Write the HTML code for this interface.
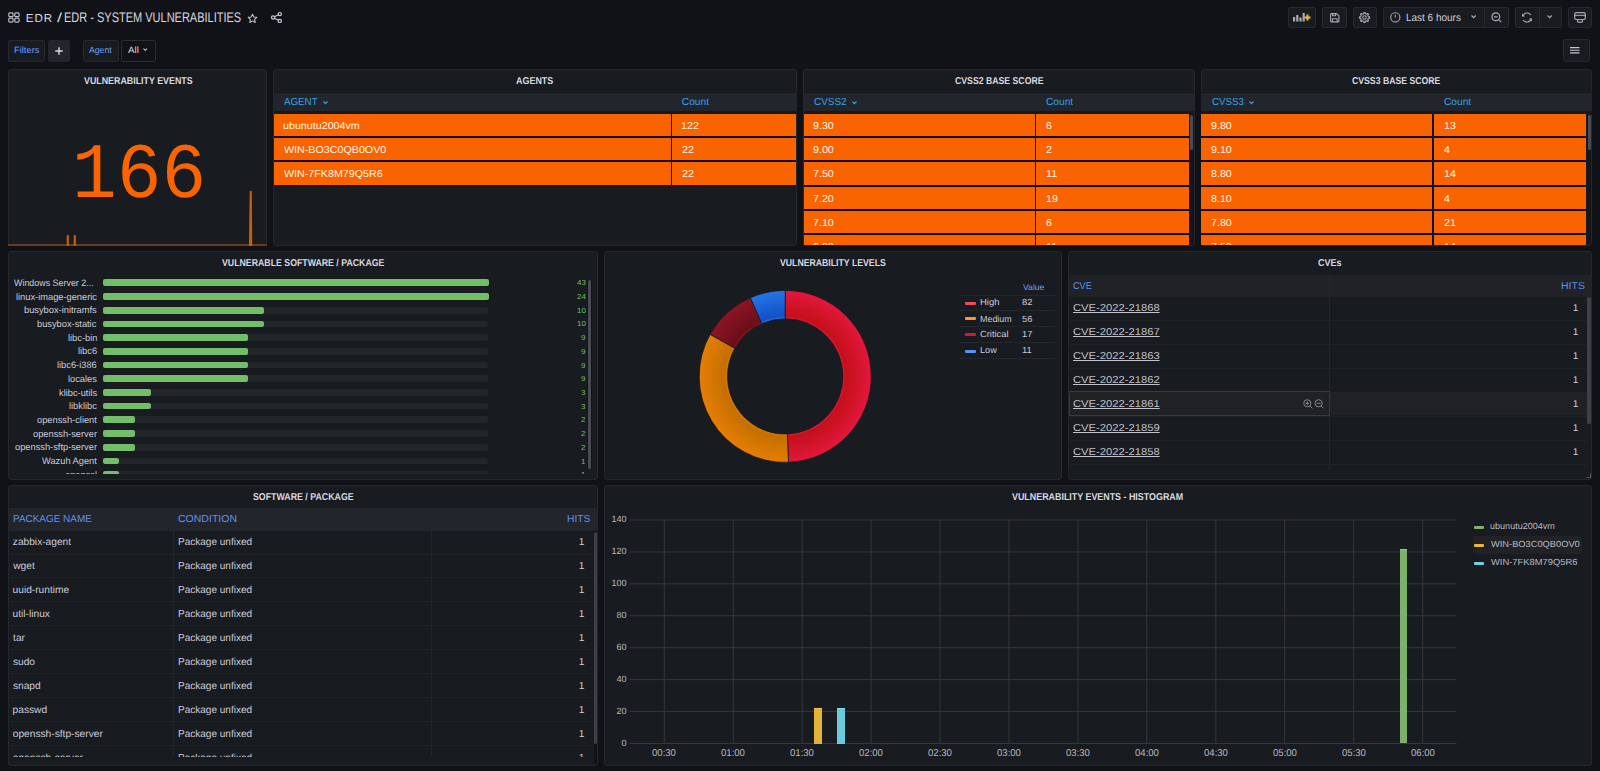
<!DOCTYPE html><html><head><meta charset="utf-8"><style>
*{margin:0;padding:0;box-sizing:border-box}
html,body{width:1600px;height:771px;overflow:hidden;background:#111217;font-family:"Liberation Sans",sans-serif;color:#ccccdc;text-rendering:geometricPrecision}
.a{position:absolute}
.p{position:absolute;background:#181b1f;border:1px solid #24272c;border-radius:3px}
.b{position:absolute;border:1px solid #25282d;border-radius:2px;background:#181b1f}
.t{position:absolute;white-space:nowrap}
svg{position:absolute;overflow:visible}
</style></head><body>
<svg style="left:8px;top:12px" width="12" height="11" viewBox="0 0 12 11"><g fill="none" stroke="#b9bac4" stroke-width="1.2"><rect x="0.8" y="0.8" width="4.3" height="3.9" rx="1"/><rect x="6.8" y="0.8" width="4.3" height="3.9" rx="1"/><rect x="0.8" y="6.2" width="4.3" height="3.9" rx="1"/><rect x="6.8" y="6.2" width="4.3" height="3.9" rx="1"/></g></svg>
<div class="t" style="left:25.75px;top:13.00px;font-size:11.6px;line-height:11.6px;font-weight:normal;color:#d8d9e0;letter-spacing:0.95px;">EDR</div>
<div class="t" style="left:57.00px;top:11.00px;font-size:13px;line-height:13px;font-weight:normal;color:#d8d9e0;transform:scaleX(1.3835);transform-origin:0 0;">/</div>
<div class="t" style="left:64.30px;top:10.00px;font-size:14px;line-height:14px;font-weight:normal;color:#d8d9e0;transform:scaleX(0.7854);transform-origin:0 0;">EDR - SYSTEM VULNERABILITIES</div>
<svg style="left:247px;top:12.5px" width="11" height="11" viewBox="0 0 24 24"><path d="M12 2.5l2.9 6.1 6.6.8-4.9 4.6 1.3 6.6L12 17.3l-5.9 3.3 1.3-6.6-4.9-4.6 6.6-.8z" fill="none" stroke="#c8c9d2" stroke-width="2.2" stroke-linejoin="round"/></svg>
<svg style="left:270.5px;top:12px" width="11" height="11" viewBox="0 0 11 11"><g fill="none" stroke="#c8c9d2" stroke-width="1.2"><circle cx="8.8" cy="2.1" r="1.6"/><circle cx="8.8" cy="8.9" r="1.6"/><circle cx="2.1" cy="5.5" r="1.6"/><path d="M3.5 4.7l3.9-2M3.5 6.3l3.9 2"/></g></svg>
<div class="b" style="left:1287.5px;top:7px;width:28.5px;height:21px;background:#181b1f;border-color:#25282d"></div>
<div class="b" style="left:1321.75px;top:7px;width:25.0px;height:21px;background:#181b1f;border-color:#25282d"></div>
<div class="b" style="left:1352.5px;top:7px;width:24.25px;height:21px;background:#181b1f;border-color:#25282d"></div>
<div class="b" style="left:1383.4px;top:7px;width:125.59999999999991px;height:21px;background:#181b1f;border-color:#25282d"></div>
<div class="a" style="left:1484px;top:8px;width:1px;height:19px;background:#25282d"></div>
<div class="b" style="left:1514.9px;top:7px;width:46.84999999999991px;height:21px;background:#181b1f;border-color:#25282d"></div>
<div class="a" style="left:1538.5px;top:8px;width:1.0px;height:19px;background:#25282d"></div>
<div class="b" style="left:1567.75px;top:7px;width:24.25px;height:21px;background:#181b1f;border-color:#25282d"></div>
<svg style="left:1293px;top:12px" width="18" height="10" viewBox="0 0 18 10"><g fill="#a8a9b3"><rect x="0" y="5" width="2.2" height="4.5"/><rect x="3.2" y="3" width="2.2" height="6.5"/><rect x="6.4" y="5.5" width="2.2" height="4"/><rect x="9.6" y="1" width="2.2" height="8.5"/></g><path d="M14.5 2.5v6M11.5 5.5h6" stroke="#f5b73b" stroke-width="2"/></svg>
<svg style="left:1330px;top:12.7px" width="9.5" height="9.5" viewBox="0 0 9.5 9.5"><path d="M0.6 1.4Q0.6 0.6 1.4 0.6H6.6L8.9 2.9V8.1Q8.9 8.9 8.1 8.9H1.4Q0.6 8.9 0.6 8.1Z" fill="none" stroke="#a8a9b3" stroke-width="1.1" stroke-linejoin="round"/><path d="M2.6 0.8V2.8H5.6V0.8M2.4 8.8V5.8H7.1V8.8" fill="none" stroke="#a8a9b3" stroke-width="1.1"/></svg>
<svg style="left:1359px;top:11.8px" width="11" height="11" viewBox="0 0 11 11"><path d="M4.73 1.68 L4.84 0.44 L6.16 0.44 L6.27 1.68 L7.65 2.25 L8.61 1.46 L9.54 2.39 L8.75 3.35 L9.32 4.73 L10.56 4.84 L10.56 6.16 L9.32 6.27 L8.75 7.65 L9.54 8.61 L8.61 9.54 L7.65 8.75 L6.27 9.32 L6.16 10.56 L4.84 10.56 L4.73 9.32 L3.35 8.75 L2.39 9.54 L1.46 8.61 L2.25 7.65 L1.68 6.27 L0.44 6.16 L0.44 4.84 L1.68 4.73 L2.25 3.35 L1.46 2.39 L2.39 1.46 L3.35 2.25Z" fill="none" stroke="#a8a9b3" stroke-width="1.1" stroke-linejoin="round"/><circle cx="5.5" cy="5.5" r="1.7" fill="none" stroke="#a8a9b3" stroke-width="1.1"/></svg>
<svg style="left:1389.7px;top:12px" width="11" height="11" viewBox="0 0 11 11"><circle cx="5.3" cy="5.4" r="4.6" fill="none" stroke="#a8a9b3" stroke-width="1.1"/><path d="M5.3 2.8v2.6" stroke="#a8a9b3" stroke-width="1.1"/></svg>
<div class="t" style="left:1406.08px;top:13.00px;font-size:10.5px;line-height:10.5px;font-weight:normal;color:#d0d1db;transform:scaleX(0.9497);transform-origin:0 0;">Last 6 hours</div>
<svg style="left:1470.75px;top:15.1px" width="5.3" height="3.2" viewBox="0 0 5.3 3.2"><path d="M0.5 0.5L2.65 2.7L4.8 0.5" fill="none" stroke="#a8a9b3" stroke-width="1.2"/></svg>
<svg style="left:1491px;top:11.5px" width="11" height="11" viewBox="0 0 11 11"><circle cx="4.8" cy="4.8" r="3.9" fill="none" stroke="#a8a9b3" stroke-width="1.2"/><path d="M2.9 4.8h3.8M7.6 7.6l2.6 2.6" stroke="#a8a9b3" stroke-width="1.2"/></svg>
<svg style="left:1521px;top:11.9px" width="12" height="11" viewBox="0 0 24 22"><path d="M4 8.5A8.5 8.5 0 0 1 19.5 6M20 13.5A8.5 8.5 0 0 1 4.5 16" fill="none" stroke="#a8a9b3" stroke-width="2.3"/><path d="M2 3v6h6zM22 19v-6h-6z" fill="#a8a9b3"/></svg>
<svg style="left:1547.4px;top:15.1px" width="5.3" height="3.2" viewBox="0 0 5.3 3.2"><path d="M0.5 0.5L2.65 2.7L4.8 0.5" fill="none" stroke="#a8a9b3" stroke-width="1.2"/></svg>
<svg style="left:1574px;top:12.25px" width="12" height="11" viewBox="0 0 12 11"><rect x="0.7" y="0.7" width="10.6" height="6.8" rx="1.5" fill="none" stroke="#a8a9b3" stroke-width="1.2"/><path d="M1 3.3h10" stroke="#a8a9b3" stroke-width="1.1"/><rect x="3.5" y="7.5" width="5" height="2.6" rx="0.6" fill="none" stroke="#a8a9b3" stroke-width="1.1"/></svg>
<div class="b" style="left:8px;top:39.5px;width:37px;height:22.0px;background:#181b1f;border-color:#25282d"></div>
<div class="t" style="left:13.73px;top:46.00px;font-size:9px;line-height:9px;font-weight:normal;color:#6e9fff;transform:scaleX(1.0369);transform-origin:0 0;">Filters</div>
<div class="b" style="left:48px;top:39.5px;width:21.799999999999997px;height:22.0px;background:#22252b;border-color:#22252b"></div>
<svg style="left:55px;top:47px" width="8" height="8" viewBox="0 0 8 8"><path d="M4 0.3v7.4M0.3 4h7.4" stroke="#d8d9e0" stroke-width="1.4"/></svg>
<div class="b" style="left:83px;top:39.5px;width:35.5px;height:22.0px;background:#181b1f;border-color:#25282d"></div>
<div class="t" style="left:89.18px;top:46.00px;font-size:9px;line-height:9px;font-weight:normal;color:#6e9fff;transform:scaleX(0.9643);transform-origin:0 0;">Agent</div>
<div class="b" style="left:121.2px;top:39.5px;width:34.8px;height:22.0px;background:#111217;border-color:#2a2d33"></div>
<div class="t" style="left:127.78px;top:46.00px;font-size:9.2px;line-height:9.2px;font-weight:normal;color:#d8d9e0;transform:scaleX(1.0630);transform-origin:0 0;">All</div>
<svg style="left:142.5px;top:48px" width="4.5" height="3" viewBox="0 0 4.5 3"><path d="M0.5 0.5L2.25 2.5L4.0 0.5" fill="none" stroke="#c8c9d2" stroke-width="1.1"/></svg>
<div class="b" style="left:1563.3px;top:39.4px;width:26.299999999999955px;height:22.200000000000003px;background:#181b1f;border-color:#25282d"></div>
<svg style="left:1570px;top:47px" width="10" height="7" viewBox="0 0 10 7"><path d="M0 0.6h9.5M0 3.3h9.5M0 5.9h9.5" stroke="#c8c9d2" stroke-width="1.1"/></svg>
<div class="p" style="left:7.5px;top:69px;width:259.5px;height:177px"></div>
<div class="t" style="left:83.55px;top:77.00px;font-size:10px;line-height:10px;font-weight:bold;color:#d8d9e0;transform:scaleX(0.8857);transform-origin:0 0;">VULNERABILITY EVENTS</div>
<div class="p" style="left:273px;top:69px;width:524px;height:177px"></div>
<div class="t" style="left:516.44px;top:77.00px;font-size:10px;line-height:10px;font-weight:bold;color:#d8d9e0;transform:scaleX(0.8942);transform-origin:0 0;">AGENTS</div>
<div class="p" style="left:803px;top:69px;width:391.5px;height:177px"></div>
<div class="t" style="left:954.64px;top:77.00px;font-size:10px;line-height:10px;font-weight:bold;color:#d8d9e0;transform:scaleX(0.8702);transform-origin:0 0;">CVSS2 BASE SCORE</div>
<div class="p" style="left:1200.5px;top:69px;width:391.5px;height:177px"></div>
<div class="t" style="left:1352.29px;top:77.00px;font-size:10px;line-height:10px;font-weight:bold;color:#d8d9e0;transform:scaleX(0.8692);transform-origin:0 0;">CVSS3 BASE SCORE</div>
<div class="t" style="left:71.73px;top:138.00px;font-size:78.6px;line-height:78.6px;font-weight:normal;color:#fa6400;transform:scaleX(0.9481);transform-origin:0 0;font-family:'Liberation Mono',monospace;">166</div>
<div class="a" style="left:8px;top:244px;width:258.5px;height:2px;background:#6a3a1a"></div>
<svg style="left:0;top:0" width="1600" height="771" viewBox="0 0 1600 771"><path d="M66.7 246V235.2Q67.8 234.6 68.9 235.2V246Z M73.7 246V235.2Q74.8 234.6 75.9 235.2V246Z M248.9 246L249.7 191Q250.7 190.3 251.8 191L252.3 246Z" fill="#c95c0c"/></svg>
<div class="a" style="left:273.5px;top:92px;width:523.0px;height:1px;background:#15171b"></div>
<div class="a" style="left:273.5px;top:93px;width:523.0px;height:17.5px;background:#22252c"></div>
<div class="a" style="left:273.5px;top:110.5px;width:523.0px;height:3.0px;background:#15171b"></div>
<div class="a" style="left:274px;top:113.5px;width:522.2px;height:71.1px;background:#0e1015"></div>
<div class="t" style="left:284.08px;top:98.00px;font-size:10.2px;line-height:10.2px;font-weight:normal;color:#33a2e5;transform:scaleX(0.9575);transform-origin:0 0;">AGENT</div>
<svg style="left:323.0px;top:100.8px" width="5" height="3.2" viewBox="0 0 5 3.2"><path d="M0.5 0.5L2.5 2.7L4.5 0.5" fill="none" stroke="#33a2e5" stroke-width="1.2"/></svg>
<div class="t" style="left:681.79px;top:98.00px;font-size:10.2px;line-height:10.2px;font-weight:normal;color:#33a2e5;">Count</div>
<div class="a" style="left:274px;top:113.75px;width:396.6px;height:22.30000000000001px;background:#fa6400"></div>
<div class="a" style="left:672px;top:113.75px;width:124.20000000000005px;height:22.30000000000001px;background:#fa6400"></div>
<div class="a" style="left:274px;top:138.0px;width:396.6px;height:22.30000000000001px;background:#fa6400"></div>
<div class="a" style="left:672px;top:138.0px;width:124.20000000000005px;height:22.30000000000001px;background:#fa6400"></div>
<div class="a" style="left:274px;top:162.25px;width:396.6px;height:22.30000000000001px;background:#fa6400"></div>
<div class="a" style="left:672px;top:162.25px;width:124.20000000000005px;height:22.30000000000001px;background:#fa6400"></div>
<div class="a" style="left:274px;top:113.5px;width:522.2px;height:131.5px;overflow:hidden">
<div class="t" style="left:9.42px;top:8.00px;font-size:10px;line-height:10px;font-weight:normal;color:#fff6ee;transform:scaleX(1.0700);transform-origin:0 0;">ubunutu2004vm</div>
<div class="t" style="left:407.49px;top:8.00px;font-size:10px;line-height:10px;font-weight:normal;color:#fff6ee;transform:scaleX(1.0700);transform-origin:0 0;">122</div>
<div class="t" style="left:10.06px;top:32.00px;font-size:10px;line-height:10px;font-weight:normal;color:#fff6ee;transform:scaleX(1.0700);transform-origin:0 0;">WIN-BO3C0QB0OV0</div>
<div class="t" style="left:407.76px;top:32.00px;font-size:10px;line-height:10px;font-weight:normal;color:#fff6ee;transform:scaleX(1.0700);transform-origin:0 0;">22</div>
<div class="t" style="left:10.06px;top:56.00px;font-size:10px;line-height:10px;font-weight:normal;color:#fff6ee;transform:scaleX(1.0700);transform-origin:0 0;">WIN-7FK8M79Q5R6</div>
<div class="t" style="left:407.76px;top:56.00px;font-size:10px;line-height:10px;font-weight:normal;color:#fff6ee;transform:scaleX(1.0700);transform-origin:0 0;">22</div>
</div>
<div class="a" style="left:803.5px;top:92px;width:390.25px;height:1px;background:#15171b"></div>
<div class="a" style="left:803.5px;top:93px;width:390.25px;height:17.5px;background:#22252c"></div>
<div class="a" style="left:803.5px;top:110.5px;width:390.25px;height:3.0px;background:#15171b"></div>
<div class="a" style="left:803.9px;top:113.5px;width:385.4px;height:131.5px;background:#0e1015"></div>
<div class="t" style="left:813.90px;top:98.00px;font-size:10.2px;line-height:10.2px;font-weight:normal;color:#33a2e5;transform:scaleX(0.9745);transform-origin:0 0;">CVSS2</div>
<svg style="left:851.5px;top:100.8px" width="5" height="3.2" viewBox="0 0 5 3.2"><path d="M0.5 0.5L2.5 2.7L4.5 0.5" fill="none" stroke="#33a2e5" stroke-width="1.2"/></svg>
<div class="t" style="left:1045.99px;top:98.00px;font-size:10.2px;line-height:10.2px;font-weight:normal;color:#33a2e5;">Count</div>
<div class="a" style="left:803.9px;top:113.75px;width:230.89999999999998px;height:22.30000000000001px;background:#fa6400"></div>
<div class="a" style="left:1036px;top:113.75px;width:153.29999999999995px;height:22.30000000000001px;background:#fa6400"></div>
<div class="a" style="left:803.9px;top:138.0px;width:230.89999999999998px;height:22.30000000000001px;background:#fa6400"></div>
<div class="a" style="left:1036px;top:138.0px;width:153.29999999999995px;height:22.30000000000001px;background:#fa6400"></div>
<div class="a" style="left:803.9px;top:162.25px;width:230.89999999999998px;height:22.30000000000001px;background:#fa6400"></div>
<div class="a" style="left:1036px;top:162.25px;width:153.29999999999995px;height:22.30000000000001px;background:#fa6400"></div>
<div class="a" style="left:803.9px;top:186.5px;width:230.89999999999998px;height:22.30000000000001px;background:#fa6400"></div>
<div class="a" style="left:1036px;top:186.5px;width:153.29999999999995px;height:22.30000000000001px;background:#fa6400"></div>
<div class="a" style="left:803.9px;top:210.75px;width:230.89999999999998px;height:22.30000000000001px;background:#fa6400"></div>
<div class="a" style="left:1036px;top:210.75px;width:153.29999999999995px;height:22.30000000000001px;background:#fa6400"></div>
<div class="a" style="left:803.9px;top:235.0px;width:230.89999999999998px;height:10.0px;background:#fa6400"></div>
<div class="a" style="left:1036px;top:235.0px;width:153.29999999999995px;height:10.0px;background:#fa6400"></div>
<div class="a" style="left:803.9px;top:113.5px;width:385.4px;height:131.5px;overflow:hidden">
<div class="t" style="left:9.41px;top:8.00px;font-size:10px;line-height:10px;font-weight:normal;color:#fff6ee;transform:scaleX(1.0700);transform-origin:0 0;">9.30</div>
<div class="t" style="left:242.07px;top:8.00px;font-size:10px;line-height:10px;font-weight:normal;color:#fff6ee;transform:scaleX(1.0700);transform-origin:0 0;">6</div>
<div class="t" style="left:9.41px;top:32.00px;font-size:10px;line-height:10px;font-weight:normal;color:#fff6ee;transform:scaleX(1.0700);transform-origin:0 0;">9.00</div>
<div class="t" style="left:242.07px;top:32.00px;font-size:10px;line-height:10px;font-weight:normal;color:#fff6ee;transform:scaleX(1.0700);transform-origin:0 0;">2</div>
<div class="t" style="left:9.35px;top:56.00px;font-size:10px;line-height:10px;font-weight:normal;color:#fff6ee;transform:scaleX(1.0700);transform-origin:0 0;">7.50</div>
<div class="t" style="left:241.79px;top:56.00px;font-size:10px;line-height:10px;font-weight:normal;color:#fff6ee;transform:scaleX(1.0700);transform-origin:0 0;">11</div>
<div class="t" style="left:9.35px;top:81.00px;font-size:10px;line-height:10px;font-weight:normal;color:#fff6ee;transform:scaleX(1.0700);transform-origin:0 0;">7.20</div>
<div class="t" style="left:241.79px;top:81.00px;font-size:10px;line-height:10px;font-weight:normal;color:#fff6ee;transform:scaleX(1.0700);transform-origin:0 0;">19</div>
<div class="t" style="left:9.35px;top:105.00px;font-size:10px;line-height:10px;font-weight:normal;color:#fff6ee;transform:scaleX(1.0700);transform-origin:0 0;">7.10</div>
<div class="t" style="left:242.07px;top:105.00px;font-size:10px;line-height:10px;font-weight:normal;color:#fff6ee;transform:scaleX(1.0700);transform-origin:0 0;">6</div>
<div class="t" style="left:9.36px;top:129.00px;font-size:10px;line-height:10px;font-weight:normal;color:#fff6ee;transform:scaleX(1.0700);transform-origin:0 0;">6.90</div>
<div class="t" style="left:241.79px;top:129.00px;font-size:10px;line-height:10px;font-weight:normal;color:#fff6ee;transform:scaleX(1.0700);transform-origin:0 0;">11</div>
</div>
<div class="a" style="left:1189.5px;top:113.5px;width:4.0px;height:131.5px;background:#141619"></div>
<div class="a" style="left:1190px;top:115px;width:3px;height:35px;background:#4a4c54;border-radius:1.5px"></div>
<div class="a" style="left:1200.75px;top:92px;width:390.75px;height:1px;background:#15171b"></div>
<div class="a" style="left:1200.75px;top:93px;width:390.75px;height:17.5px;background:#22252c"></div>
<div class="a" style="left:1200.75px;top:110.5px;width:390.75px;height:3.0px;background:#15171b"></div>
<div class="a" style="left:1201.3px;top:113.5px;width:385.20000000000005px;height:131.5px;background:#0e1015"></div>
<div class="t" style="left:1212.01px;top:98.00px;font-size:10.2px;line-height:10.2px;font-weight:normal;color:#33a2e5;transform:scaleX(0.9539);transform-origin:0 0;">CVSS3</div>
<svg style="left:1249.0px;top:100.8px" width="5" height="3.2" viewBox="0 0 5 3.2"><path d="M0.5 0.5L2.5 2.7L4.5 0.5" fill="none" stroke="#33a2e5" stroke-width="1.2"/></svg>
<div class="t" style="left:1443.99px;top:98.00px;font-size:10.2px;line-height:10.2px;font-weight:normal;color:#33a2e5;">Count</div>
<div class="a" style="left:1201.3px;top:113.75px;width:230.70000000000005px;height:22.30000000000001px;background:#fa6400"></div>
<div class="a" style="left:1433.7px;top:113.75px;width:152.79999999999995px;height:22.30000000000001px;background:#fa6400"></div>
<div class="a" style="left:1201.3px;top:138.0px;width:230.70000000000005px;height:22.30000000000001px;background:#fa6400"></div>
<div class="a" style="left:1433.7px;top:138.0px;width:152.79999999999995px;height:22.30000000000001px;background:#fa6400"></div>
<div class="a" style="left:1201.3px;top:162.25px;width:230.70000000000005px;height:22.30000000000001px;background:#fa6400"></div>
<div class="a" style="left:1433.7px;top:162.25px;width:152.79999999999995px;height:22.30000000000001px;background:#fa6400"></div>
<div class="a" style="left:1201.3px;top:186.5px;width:230.70000000000005px;height:22.30000000000001px;background:#fa6400"></div>
<div class="a" style="left:1433.7px;top:186.5px;width:152.79999999999995px;height:22.30000000000001px;background:#fa6400"></div>
<div class="a" style="left:1201.3px;top:210.75px;width:230.70000000000005px;height:22.30000000000001px;background:#fa6400"></div>
<div class="a" style="left:1433.7px;top:210.75px;width:152.79999999999995px;height:22.30000000000001px;background:#fa6400"></div>
<div class="a" style="left:1201.3px;top:235.0px;width:230.70000000000005px;height:10.0px;background:#fa6400"></div>
<div class="a" style="left:1433.7px;top:235.0px;width:152.79999999999995px;height:10.0px;background:#fa6400"></div>
<div class="a" style="left:1201.3px;top:113.5px;width:385.20000000000005px;height:131.5px;overflow:hidden">
<div class="t" style="left:10.01px;top:8.00px;font-size:10px;line-height:10px;font-weight:normal;color:#fff6ee;transform:scaleX(1.0700);transform-origin:0 0;">9.80</div>
<div class="t" style="left:242.39px;top:8.00px;font-size:10px;line-height:10px;font-weight:normal;color:#fff6ee;transform:scaleX(1.0700);transform-origin:0 0;">13</div>
<div class="t" style="left:10.01px;top:32.00px;font-size:10px;line-height:10px;font-weight:normal;color:#fff6ee;transform:scaleX(1.0700);transform-origin:0 0;">9.10</div>
<div class="t" style="left:242.96px;top:32.00px;font-size:10px;line-height:10px;font-weight:normal;color:#fff6ee;transform:scaleX(1.0700);transform-origin:0 0;">4</div>
<div class="t" style="left:10.04px;top:56.00px;font-size:10px;line-height:10px;font-weight:normal;color:#fff6ee;transform:scaleX(1.0700);transform-origin:0 0;">8.80</div>
<div class="t" style="left:242.39px;top:56.00px;font-size:10px;line-height:10px;font-weight:normal;color:#fff6ee;transform:scaleX(1.0700);transform-origin:0 0;">14</div>
<div class="t" style="left:10.04px;top:81.00px;font-size:10px;line-height:10px;font-weight:normal;color:#fff6ee;transform:scaleX(1.0700);transform-origin:0 0;">8.10</div>
<div class="t" style="left:242.96px;top:81.00px;font-size:10px;line-height:10px;font-weight:normal;color:#fff6ee;transform:scaleX(1.0700);transform-origin:0 0;">4</div>
<div class="t" style="left:9.95px;top:105.00px;font-size:10px;line-height:10px;font-weight:normal;color:#fff6ee;transform:scaleX(1.0700);transform-origin:0 0;">7.80</div>
<div class="t" style="left:242.67px;top:105.00px;font-size:10px;line-height:10px;font-weight:normal;color:#fff6ee;transform:scaleX(1.0700);transform-origin:0 0;">21</div>
<div class="t" style="left:9.95px;top:129.00px;font-size:10px;line-height:10px;font-weight:normal;color:#fff6ee;transform:scaleX(1.0700);transform-origin:0 0;">7.50</div>
<div class="t" style="left:242.39px;top:129.00px;font-size:10px;line-height:10px;font-weight:normal;color:#fff6ee;transform:scaleX(1.0700);transform-origin:0 0;">14</div>
</div>
<div class="a" style="left:1587px;top:113.5px;width:4px;height:131.5px;background:#141619"></div>
<div class="a" style="left:1587.5px;top:115px;width:3.0px;height:35px;background:#4a4c54;border-radius:1.5px"></div>
<div class="p" style="left:7.5px;top:251px;width:590.5px;height:229px"></div>
<div class="t" style="left:221.95px;top:259.00px;font-size:10px;line-height:10px;font-weight:bold;color:#d8d9e0;transform:scaleX(0.8760);transform-origin:0 0;">VULNERABLE SOFTWARE / PACKAGE</div>
<div class="a" style="left:8px;top:252px;width:589px;height:221.7px;overflow:hidden">
<div class="a" style="left:95.1px;top:27.40px;width:384.6px;height:6.8px;background:#22252a;border-radius:2px"></div>
<div class="a" style="left:95.1px;top:27.40px;width:386.40px;height:6.8px;background:#73bf69;border-radius:2px"></div>
<div class="t" style="left:6.16px;top:26.00px;font-size:9.4px;line-height:9.4px;font-weight:normal;color:#ccccdc;transform:scaleX(0.9494);transform-origin:0 0;">Windows Server 2...</div>
<div class="t" style="left:568.73px;top:27.00px;font-size:7.2px;line-height:7.2px;font-weight:normal;color:#73bf69;transform:scaleX(1.1000);transform-origin:0 0;">43</div>
<div class="a" style="left:95.1px;top:41.10px;width:384.6px;height:6.8px;background:#22252a;border-radius:2px"></div>
<div class="a" style="left:95.1px;top:41.10px;width:386.40px;height:6.8px;background:#73bf69;border-radius:2px"></div>
<div class="t" style="left:7.64px;top:40.00px;font-size:9.4px;line-height:9.4px;font-weight:normal;color:#ccccdc;transform:scaleX(0.9900);transform-origin:0 0;">linux-image-generic</div>
<div class="t" style="left:568.62px;top:41.00px;font-size:7.2px;line-height:7.2px;font-weight:normal;color:#73bf69;transform:scaleX(1.1000);transform-origin:0 0;">24</div>
<div class="a" style="left:95.1px;top:54.80px;width:384.6px;height:6.8px;background:#22252a;border-radius:2px"></div>
<div class="a" style="left:95.1px;top:54.80px;width:161.00px;height:6.8px;background:#73bf69;border-radius:2px"></div>
<div class="t" style="left:16.01px;top:53.00px;font-size:9.4px;line-height:9.4px;font-weight:normal;color:#ccccdc;transform:scaleX(0.9900);transform-origin:0 0;">busybox-initramfs</div>
<div class="t" style="left:568.69px;top:55.00px;font-size:7.2px;line-height:7.2px;font-weight:normal;color:#73bf69;transform:scaleX(1.1000);transform-origin:0 0;">10</div>
<div class="a" style="left:95.1px;top:68.50px;width:384.6px;height:6.8px;background:#22252a;border-radius:2px"></div>
<div class="a" style="left:95.1px;top:68.50px;width:161.00px;height:6.8px;background:#73bf69;border-radius:2px"></div>
<div class="t" style="left:29.36px;top:67.00px;font-size:9.4px;line-height:9.4px;font-weight:normal;color:#ccccdc;transform:scaleX(0.9900);transform-origin:0 0;">busybox-static</div>
<div class="t" style="left:568.69px;top:68.00px;font-size:7.2px;line-height:7.2px;font-weight:normal;color:#73bf69;transform:scaleX(1.1000);transform-origin:0 0;">10</div>
<div class="a" style="left:95.1px;top:82.20px;width:384.6px;height:6.8px;background:#22252a;border-radius:2px"></div>
<div class="a" style="left:95.1px;top:82.20px;width:144.90px;height:6.8px;background:#73bf69;border-radius:2px"></div>
<div class="t" style="left:59.71px;top:81.00px;font-size:9.4px;line-height:9.4px;font-weight:normal;color:#ccccdc;transform:scaleX(0.9900);transform-origin:0 0;">libc-bin</div>
<div class="t" style="left:573.17px;top:82.00px;font-size:7.2px;line-height:7.2px;font-weight:normal;color:#73bf69;transform:scaleX(1.1000);transform-origin:0 0;">9</div>
<div class="a" style="left:95.1px;top:95.90px;width:384.6px;height:6.8px;background:#22252a;border-radius:2px"></div>
<div class="a" style="left:95.1px;top:95.90px;width:144.90px;height:6.8px;background:#73bf69;border-radius:2px"></div>
<div class="t" style="left:69.86px;top:94.00px;font-size:9.4px;line-height:9.4px;font-weight:normal;color:#ccccdc;transform:scaleX(0.9900);transform-origin:0 0;">libc6</div>
<div class="t" style="left:573.17px;top:96.00px;font-size:7.2px;line-height:7.2px;font-weight:normal;color:#73bf69;transform:scaleX(1.1000);transform-origin:0 0;">9</div>
<div class="a" style="left:95.1px;top:109.60px;width:384.6px;height:6.8px;background:#22252a;border-radius:2px"></div>
<div class="a" style="left:95.1px;top:109.60px;width:144.90px;height:6.8px;background:#73bf69;border-radius:2px"></div>
<div class="t" style="left:49.17px;top:108.00px;font-size:9.4px;line-height:9.4px;font-weight:normal;color:#ccccdc;transform:scaleX(0.9900);transform-origin:0 0;">libc6-i386</div>
<div class="t" style="left:573.17px;top:110.00px;font-size:7.2px;line-height:7.2px;font-weight:normal;color:#73bf69;transform:scaleX(1.1000);transform-origin:0 0;">9</div>
<div class="a" style="left:95.1px;top:123.30px;width:384.6px;height:6.8px;background:#22252a;border-radius:2px"></div>
<div class="a" style="left:95.1px;top:123.30px;width:144.90px;height:6.8px;background:#73bf69;border-radius:2px"></div>
<div class="t" style="left:59.97px;top:122.00px;font-size:9.4px;line-height:9.4px;font-weight:normal;color:#ccccdc;transform:scaleX(0.9900);transform-origin:0 0;">locales</div>
<div class="t" style="left:573.17px;top:123.00px;font-size:7.2px;line-height:7.2px;font-weight:normal;color:#73bf69;transform:scaleX(1.1000);transform-origin:0 0;">9</div>
<div class="a" style="left:95.1px;top:137.00px;width:384.6px;height:6.8px;background:#22252a;border-radius:2px"></div>
<div class="a" style="left:95.1px;top:137.00px;width:48.30px;height:6.8px;background:#73bf69;border-radius:2px"></div>
<div class="t" style="left:50.67px;top:136.00px;font-size:9.4px;line-height:9.4px;font-weight:normal;color:#ccccdc;transform:scaleX(0.9900);transform-origin:0 0;">klibc-utils</div>
<div class="t" style="left:573.14px;top:137.00px;font-size:7.2px;line-height:7.2px;font-weight:normal;color:#73bf69;transform:scaleX(1.1000);transform-origin:0 0;">3</div>
<div class="a" style="left:95.1px;top:150.70px;width:384.6px;height:6.8px;background:#22252a;border-radius:2px"></div>
<div class="a" style="left:95.1px;top:150.70px;width:48.30px;height:6.8px;background:#73bf69;border-radius:2px"></div>
<div class="t" style="left:60.91px;top:149.00px;font-size:9.4px;line-height:9.4px;font-weight:normal;color:#ccccdc;transform:scaleX(0.9900);transform-origin:0 0;">libklibc</div>
<div class="t" style="left:573.14px;top:151.00px;font-size:7.2px;line-height:7.2px;font-weight:normal;color:#73bf69;transform:scaleX(1.1000);transform-origin:0 0;">3</div>
<div class="a" style="left:95.1px;top:164.40px;width:384.6px;height:6.8px;background:#22252a;border-radius:2px"></div>
<div class="a" style="left:95.1px;top:164.40px;width:32.20px;height:6.8px;background:#73bf69;border-radius:2px"></div>
<div class="t" style="left:28.66px;top:163.00px;font-size:9.4px;line-height:9.4px;font-weight:normal;color:#ccccdc;transform:scaleX(0.9900);transform-origin:0 0;">openssh-client</div>
<div class="t" style="left:573.19px;top:164.00px;font-size:7.2px;line-height:7.2px;font-weight:normal;color:#73bf69;transform:scaleX(1.1000);transform-origin:0 0;">2</div>
<div class="a" style="left:95.1px;top:178.10px;width:384.6px;height:6.8px;background:#22252a;border-radius:2px"></div>
<div class="a" style="left:95.1px;top:178.10px;width:32.20px;height:6.8px;background:#73bf69;border-radius:2px"></div>
<div class="t" style="left:24.61px;top:177.00px;font-size:9.4px;line-height:9.4px;font-weight:normal;color:#ccccdc;transform:scaleX(0.9900);transform-origin:0 0;">openssh-server</div>
<div class="t" style="left:573.19px;top:178.00px;font-size:7.2px;line-height:7.2px;font-weight:normal;color:#73bf69;transform:scaleX(1.1000);transform-origin:0 0;">2</div>
<div class="a" style="left:95.1px;top:191.80px;width:384.6px;height:6.8px;background:#22252a;border-radius:2px"></div>
<div class="a" style="left:95.1px;top:191.80px;width:32.20px;height:6.8px;background:#73bf69;border-radius:2px"></div>
<div class="t" style="left:6.51px;top:190.00px;font-size:9.4px;line-height:9.4px;font-weight:normal;color:#ccccdc;transform:scaleX(0.9900);transform-origin:0 0;">openssh-sftp-server</div>
<div class="t" style="left:573.19px;top:192.00px;font-size:7.2px;line-height:7.2px;font-weight:normal;color:#73bf69;transform:scaleX(1.1000);transform-origin:0 0;">2</div>
<div class="a" style="left:95.1px;top:205.50px;width:384.6px;height:6.8px;background:#22252a;border-radius:2px"></div>
<div class="a" style="left:95.1px;top:205.50px;width:16.10px;height:6.8px;background:#73bf69;border-radius:2px"></div>
<div class="t" style="left:33.66px;top:204.00px;font-size:9.4px;line-height:9.4px;font-weight:normal;color:#ccccdc;transform:scaleX(0.9900);transform-origin:0 0;">Wazuh Agent</div>
<div class="t" style="left:573.18px;top:206.00px;font-size:7.2px;line-height:7.2px;font-weight:normal;color:#73bf69;transform:scaleX(1.1000);transform-origin:0 0;">1</div>
<div class="a" style="left:95.1px;top:219.20px;width:384.6px;height:6.8px;background:#22252a;border-radius:2px"></div>
<div class="a" style="left:95.1px;top:219.20px;width:16.10px;height:6.8px;background:#73bf69;border-radius:2px"></div>
<div class="t" style="left:57.14px;top:218.00px;font-size:9.4px;line-height:9.4px;font-weight:normal;color:#ccccdc;transform:scaleX(0.9900);transform-origin:0 0;">openssl</div>
<div class="t" style="left:573.18px;top:219.00px;font-size:7.2px;line-height:7.2px;font-weight:normal;color:#73bf69;transform:scaleX(1.1000);transform-origin:0 0;">1</div>
</div>
<div class="a" style="left:587.2px;top:279.5px;width:4.399999999999977px;height:189.5px;background:#121316"></div>
<div class="a" style="left:587.6px;top:280px;width:3.6000000000000227px;height:189px;background:#4a4c54;border-radius:1.5px"></div>
<div class="p" style="left:604px;top:251px;width:457.5px;height:229px"></div>
<div class="t" style="left:779.95px;top:259.00px;font-size:10px;line-height:10px;font-weight:bold;color:#d8d9e0;transform:scaleX(0.8707);transform-origin:0 0;">VULNERABILITY LEVELS</div>
<svg style="left:0;top:0" width="1600" height="771" viewBox="0 0 1600 771"><defs><radialGradient id="g0" gradientUnits="userSpaceOnUse" cx="785.2" cy="376.4" r="86"><stop offset="0.672" stop-color="#e1173a"/><stop offset="0.70" stop-color="#c4101a"/><stop offset="0.985" stop-color="#e1173a"/><stop offset="1" stop-color="#e1173a"/></radialGradient><radialGradient id="g1" gradientUnits="userSpaceOnUse" cx="785.2" cy="376.4" r="86"><stop offset="0.672" stop-color="#e47d05"/><stop offset="0.70" stop-color="#c46f00"/><stop offset="0.985" stop-color="#e47d05"/><stop offset="1" stop-color="#e47d05"/></radialGradient><radialGradient id="g2" gradientUnits="userSpaceOnUse" cx="785.2" cy="376.4" r="86"><stop offset="0.672" stop-color="#8c1424"/><stop offset="0.70" stop-color="#6a0f19"/><stop offset="0.985" stop-color="#8c1424"/><stop offset="1" stop-color="#8c1424"/></radialGradient><radialGradient id="g3" gradientUnits="userSpaceOnUse" cx="785.2" cy="376.4" r="86"><stop offset="0.672" stop-color="#2474e4"/><stop offset="0.70" stop-color="#1450c6"/><stop offset="0.985" stop-color="#2474e4"/><stop offset="1" stop-color="#2474e4"/></radialGradient></defs><path d="M785.20 290.40A86 86 0 0 1 788.45 462.34L787.38 434.06A57.7 57.7 0 0 0 785.20 318.70Z" fill="url(#g0)" stroke="#181b1f" stroke-width="0.8"/><path d="M788.45 462.34A86 86 0 0 1 710.19 334.34L734.87 348.18A57.7 57.7 0 0 0 787.38 434.06Z" fill="url(#g1)" stroke="#181b1f" stroke-width="0.8"/><path d="M710.19 334.34A86 86 0 0 1 750.42 297.75L761.86 323.63A57.7 57.7 0 0 0 734.87 348.18Z" fill="url(#g2)" stroke="#181b1f" stroke-width="0.8"/><path d="M750.42 297.75A86 86 0 0 1 785.20 290.40L785.20 318.70A57.7 57.7 0 0 0 761.86 323.63Z" fill="url(#g3)" stroke="#181b1f" stroke-width="0.8"/></svg>
<div class="t" style="left:1022.77px;top:283.00px;font-size:8.4px;line-height:8.4px;font-weight:normal;color:#6e9fff;transform:scaleX(1.0267);transform-origin:0 0;">Value</div>
<div class="a" style="left:960.2px;top:294.7px;width:94.5px;height:1.0px;background:#23262b"></div>
<div class="a" style="left:960.2px;top:309.9px;width:94.5px;height:1.0px;background:#23262b"></div>
<div class="a" style="left:960.2px;top:326.3px;width:94.5px;height:1.0px;background:#23262b"></div>
<div class="a" style="left:960.2px;top:342.0px;width:94.5px;height:1.0px;background:#23262b"></div>
<div class="a" style="left:960.2px;top:358.1px;width:94.5px;height:1.0px;background:#23262b"></div>
<div class="a" style="left:965px;top:302.0px;width:10.700000000000045px;height:3.0px;background:#f2495c;border-radius:1px"></div>
<div class="t" style="left:980.12px;top:298.00px;font-size:8.9px;line-height:8.9px;font-weight:normal;color:#ccccdc;transform:scaleX(1.0701);transform-origin:0 0;">High</div>
<div class="t" style="left:1022.40px;top:298.00px;font-size:8.9px;line-height:8.9px;font-weight:normal;color:#ccccdc;transform:scaleX(1.0500);transform-origin:0 0;">82</div>
<div class="a" style="left:965px;top:317.40000000000003px;width:10.700000000000045px;height:3.0px;background:#ff9830;border-radius:1px"></div>
<div class="t" style="left:980.17px;top:315.00px;font-size:8.9px;line-height:8.9px;font-weight:normal;color:#ccccdc;transform:scaleX(1.0050);transform-origin:0 0;">Medium</div>
<div class="t" style="left:1022.43px;top:315.00px;font-size:8.9px;line-height:8.9px;font-weight:normal;color:#ccccdc;transform:scaleX(1.0500);transform-origin:0 0;">56</div>
<div class="a" style="left:965px;top:333.2px;width:10.700000000000045px;height:3.0px;background:#d01b30;border-radius:1px"></div>
<div class="t" style="left:980.43px;top:330.00px;font-size:8.9px;line-height:8.9px;font-weight:normal;color:#ccccdc;transform:scaleX(1.0510);transform-origin:0 0;">Critical</div>
<div class="t" style="left:1022.09px;top:330.00px;font-size:8.9px;line-height:8.9px;font-weight:normal;color:#ccccdc;transform:scaleX(1.0500);transform-origin:0 0;">17</div>
<div class="a" style="left:965px;top:349.5px;width:10.700000000000045px;height:3.0px;background:#5794f2;border-radius:1px"></div>
<div class="t" style="left:980.15px;top:346.00px;font-size:8.9px;line-height:8.9px;font-weight:normal;color:#ccccdc;transform:scaleX(1.0308);transform-origin:0 0;">Low</div>
<div class="t" style="left:1022.09px;top:346.00px;font-size:8.9px;line-height:8.9px;font-weight:normal;color:#ccccdc;transform:scaleX(1.0500);transform-origin:0 0;">11</div>
<div class="p" style="left:1068px;top:251px;width:524px;height:229px"></div>
<div class="t" style="left:1317.83px;top:259.00px;font-size:10px;line-height:10px;font-weight:bold;color:#d8d9e0;transform:scaleX(0.9008);transform-origin:0 0;">CVEs</div>
<div class="a" style="left:1068.5px;top:274.7px;width:523.0px;height:22.100000000000023px;background:#202226"></div>
<div class="t" style="left:1073.04px;top:282.00px;font-size:9.8px;line-height:9.8px;font-weight:normal;color:#5f8ff0;transform:scaleX(0.9300);transform-origin:0 0;">CVE</div>
<div class="t" style="left:1560.58px;top:282.00px;font-size:9.8px;line-height:9.8px;font-weight:normal;color:#5f8ff0;transform:scaleX(1.0700);transform-origin:0 0;">HITS</div>
<div class="a" style="left:1329px;top:274.7px;width:1px;height:195.3px;background:#23262a"></div>
<div class="a" style="left:1068.5px;top:391.6px;width:518.0px;height:23.899999999999977px;background:#1f2125"></div>
<div class="a" style="left:1068.5px;top:391.2px;width:261.79999999999995px;height:24.600000000000023px;border:1px solid #2a3a5c"></div>
<div class="t" style="left:1072.94px;top:304.00px;font-size:10px;line-height:10px;font-weight:normal;color:#c0c1cb;transform:scaleX(1.1213);transform-origin:0 0;text-decoration:underline;text-underline-offset:1px;">CVE-2022-21868</div>
<div class="t" style="left:1572.72px;top:304.00px;font-size:10px;line-height:10px;font-weight:normal;color:#ccccdc;">1</div>
<div class="t" style="left:1072.94px;top:328.00px;font-size:10px;line-height:10px;font-weight:normal;color:#c0c1cb;transform:scaleX(1.1223);transform-origin:0 0;text-decoration:underline;text-underline-offset:1px;">CVE-2022-21867</div>
<div class="t" style="left:1572.72px;top:328.00px;font-size:10px;line-height:10px;font-weight:normal;color:#ccccdc;">1</div>
<div class="t" style="left:1072.94px;top:352.00px;font-size:10px;line-height:10px;font-weight:normal;color:#c0c1cb;transform:scaleX(1.1213);transform-origin:0 0;text-decoration:underline;text-underline-offset:1px;">CVE-2022-21863</div>
<div class="t" style="left:1572.72px;top:352.00px;font-size:10px;line-height:10px;font-weight:normal;color:#ccccdc;">1</div>
<div class="t" style="left:1072.94px;top:376.00px;font-size:10px;line-height:10px;font-weight:normal;color:#c0c1cb;transform:scaleX(1.1223);transform-origin:0 0;text-decoration:underline;text-underline-offset:1px;">CVE-2022-21862</div>
<div class="t" style="left:1572.72px;top:376.00px;font-size:10px;line-height:10px;font-weight:normal;color:#ccccdc;">1</div>
<div class="t" style="left:1072.94px;top:400.00px;font-size:10px;line-height:10px;font-weight:normal;color:#c0c1cb;transform:scaleX(1.1220);transform-origin:0 0;text-decoration:underline;text-underline-offset:1px;">CVE-2022-21861</div>
<div class="t" style="left:1572.72px;top:400.00px;font-size:10px;line-height:10px;font-weight:normal;color:#ccccdc;">1</div>
<div class="t" style="left:1072.94px;top:424.00px;font-size:10px;line-height:10px;font-weight:normal;color:#c0c1cb;transform:scaleX(1.1219);transform-origin:0 0;text-decoration:underline;text-underline-offset:1px;">CVE-2022-21859</div>
<div class="t" style="left:1572.72px;top:424.00px;font-size:10px;line-height:10px;font-weight:normal;color:#ccccdc;">1</div>
<div class="t" style="left:1072.94px;top:448.00px;font-size:10px;line-height:10px;font-weight:normal;color:#c0c1cb;transform:scaleX(1.1213);transform-origin:0 0;text-decoration:underline;text-underline-offset:1px;">CVE-2022-21858</div>
<div class="t" style="left:1572.72px;top:448.00px;font-size:10px;line-height:10px;font-weight:normal;color:#ccccdc;">1</div>
<div class="a" style="left:1068.5px;top:320.4px;width:518.0px;height:1.0px;background:#202226"></div>
<div class="a" style="left:1068.5px;top:344.4px;width:518.0px;height:1.0px;background:#202226"></div>
<div class="a" style="left:1068.5px;top:368.4px;width:518.0px;height:1.0px;background:#202226"></div>
<div class="a" style="left:1068.5px;top:392.4px;width:518.0px;height:1.0px;background:#202226"></div>
<div class="a" style="left:1068.5px;top:416.4px;width:518.0px;height:1.0px;background:#202226"></div>
<div class="a" style="left:1068.5px;top:440.4px;width:518.0px;height:1.0px;background:#202226"></div>
<div class="a" style="left:1068.5px;top:464.4px;width:518.0px;height:1.0px;background:#202226"></div>
<svg style="left:1303px;top:399.3px" width="22" height="10" viewBox="0 0 22 10"><g fill="none" stroke="#8e8f99" stroke-width="0.9"><circle cx="4.3" cy="4.3" r="3.6"/><path d="M6.9 6.9L9.3 9.3M2.4 4.3h3.8M4.3 2.4v3.8"/><circle cx="15.6" cy="4.3" r="3.6"/><path d="M18.2 6.9L20.6 9.3M13.7 4.3h3.8"/></g></svg>
<div class="a" style="left:1586.5px;top:297px;width:4.900000000000091px;height:127px;background:#121317"></div>
<div class="a" style="left:1587px;top:297.3px;width:4px;height:126.30000000000001px;background:#3e4047;border-radius:1.5px"></div>
<svg style="left:1586px;top:473px" width="5" height="5" viewBox="0 0 5 5"><path d="M0.5 4.5H4.5V0.5" fill="none" stroke="#55575e" stroke-width="1"/></svg>
<div class="p" style="left:7.5px;top:485px;width:590.5px;height:281px"></div>
<div class="t" style="left:252.75px;top:493.00px;font-size:10px;line-height:10px;font-weight:bold;color:#d8d9e0;transform:scaleX(0.8804);transform-origin:0 0;">SOFTWARE / PACKAGE</div>
<div class="a" style="left:8.5px;top:507.5px;width:588.5px;height:23.25px;background:#22252b"></div>
<div class="t" style="left:12.68px;top:515.00px;font-size:10.2px;line-height:10.2px;font-weight:normal;color:#5f8ff0;transform:scaleX(0.9761);transform-origin:0 0;">PACKAGE NAME</div>
<div class="t" style="left:178.27px;top:515.00px;font-size:10.2px;line-height:10.2px;font-weight:normal;color:#5f8ff0;transform:scaleX(1.0323);transform-origin:0 0;">CONDITION</div>
<div class="t" style="left:567.46px;top:515.00px;font-size:10.2px;line-height:10.2px;font-weight:normal;color:#5f8ff0;transform:scaleX(1.0073);transform-origin:0 0;">HITS</div>
<div class="a" style="left:173px;top:507.5px;width:1px;height:249.5px;background:#23262a"></div>
<div class="a" style="left:431px;top:507.5px;width:1px;height:249.5px;background:#23262a"></div>
<div class="a" style="left:8px;top:531px;width:589px;height:226px;overflow:hidden">
<div class="t" style="left:4.79px;top:7.00px;font-size:10.2px;line-height:10.2px;font-weight:normal;color:#ccccdc;">zabbix-agent</div>
<div class="t" style="left:169.68px;top:7.00px;font-size:10.2px;line-height:10.2px;font-weight:normal;color:#ccccdc;transform:scaleX(0.9834);transform-origin:0 0;">Package unfixed</div>
<div class="t" style="left:570.72px;top:7.00px;font-size:10.2px;line-height:10.2px;font-weight:normal;color:#ccccdc;">1</div>
<div class="a" style="left:0.5px;top:22.50px;width:585px;height:1px;background:#202226"></div>
<div class="t" style="left:5.22px;top:31.00px;font-size:10.2px;line-height:10.2px;font-weight:normal;color:#ccccdc;">wget</div>
<div class="t" style="left:169.68px;top:31.00px;font-size:10.2px;line-height:10.2px;font-weight:normal;color:#ccccdc;transform:scaleX(0.9834);transform-origin:0 0;">Package unfixed</div>
<div class="t" style="left:570.72px;top:31.00px;font-size:10.2px;line-height:10.2px;font-weight:normal;color:#ccccdc;">1</div>
<div class="a" style="left:0.5px;top:46.45px;width:585px;height:1px;background:#202226"></div>
<div class="t" style="left:4.55px;top:55.00px;font-size:10.2px;line-height:10.2px;font-weight:normal;color:#ccccdc;">uuid-runtime</div>
<div class="t" style="left:169.68px;top:55.00px;font-size:10.2px;line-height:10.2px;font-weight:normal;color:#ccccdc;transform:scaleX(0.9834);transform-origin:0 0;">Package unfixed</div>
<div class="t" style="left:570.72px;top:55.00px;font-size:10.2px;line-height:10.2px;font-weight:normal;color:#ccccdc;">1</div>
<div class="a" style="left:0.5px;top:70.40px;width:585px;height:1px;background:#202226"></div>
<div class="t" style="left:4.55px;top:79.00px;font-size:10.2px;line-height:10.2px;font-weight:normal;color:#ccccdc;">util-linux</div>
<div class="t" style="left:169.68px;top:79.00px;font-size:10.2px;line-height:10.2px;font-weight:normal;color:#ccccdc;transform:scaleX(0.9834);transform-origin:0 0;">Package unfixed</div>
<div class="t" style="left:570.72px;top:79.00px;font-size:10.2px;line-height:10.2px;font-weight:normal;color:#ccccdc;">1</div>
<div class="a" style="left:0.5px;top:94.35px;width:585px;height:1px;background:#202226"></div>
<div class="t" style="left:5.05px;top:103.00px;font-size:10.2px;line-height:10.2px;font-weight:normal;color:#ccccdc;">tar</div>
<div class="t" style="left:169.68px;top:103.00px;font-size:10.2px;line-height:10.2px;font-weight:normal;color:#ccccdc;transform:scaleX(0.9834);transform-origin:0 0;">Package unfixed</div>
<div class="t" style="left:570.72px;top:103.00px;font-size:10.2px;line-height:10.2px;font-weight:normal;color:#ccccdc;">1</div>
<div class="a" style="left:0.5px;top:118.30px;width:585px;height:1px;background:#202226"></div>
<div class="t" style="left:4.92px;top:127.00px;font-size:10.2px;line-height:10.2px;font-weight:normal;color:#ccccdc;">sudo</div>
<div class="t" style="left:169.68px;top:127.00px;font-size:10.2px;line-height:10.2px;font-weight:normal;color:#ccccdc;transform:scaleX(0.9834);transform-origin:0 0;">Package unfixed</div>
<div class="t" style="left:570.72px;top:127.00px;font-size:10.2px;line-height:10.2px;font-weight:normal;color:#ccccdc;">1</div>
<div class="a" style="left:0.5px;top:142.25px;width:585px;height:1px;background:#202226"></div>
<div class="t" style="left:4.92px;top:151.00px;font-size:10.2px;line-height:10.2px;font-weight:normal;color:#ccccdc;">snapd</div>
<div class="t" style="left:169.68px;top:151.00px;font-size:10.2px;line-height:10.2px;font-weight:normal;color:#ccccdc;transform:scaleX(0.9834);transform-origin:0 0;">Package unfixed</div>
<div class="t" style="left:570.72px;top:151.00px;font-size:10.2px;line-height:10.2px;font-weight:normal;color:#ccccdc;">1</div>
<div class="a" style="left:0.5px;top:166.20px;width:585px;height:1px;background:#202226"></div>
<div class="t" style="left:4.55px;top:175.00px;font-size:10.2px;line-height:10.2px;font-weight:normal;color:#ccccdc;">passwd</div>
<div class="t" style="left:169.68px;top:175.00px;font-size:10.2px;line-height:10.2px;font-weight:normal;color:#ccccdc;transform:scaleX(0.9834);transform-origin:0 0;">Package unfixed</div>
<div class="t" style="left:570.72px;top:175.00px;font-size:10.2px;line-height:10.2px;font-weight:normal;color:#ccccdc;">1</div>
<div class="a" style="left:0.5px;top:190.15px;width:585px;height:1px;background:#202226"></div>
<div class="t" style="left:4.77px;top:199.00px;font-size:10.2px;line-height:10.2px;font-weight:normal;color:#ccccdc;">openssh-sftp-server</div>
<div class="t" style="left:169.68px;top:199.00px;font-size:10.2px;line-height:10.2px;font-weight:normal;color:#ccccdc;transform:scaleX(0.9834);transform-origin:0 0;">Package unfixed</div>
<div class="t" style="left:570.72px;top:199.00px;font-size:10.2px;line-height:10.2px;font-weight:normal;color:#ccccdc;">1</div>
<div class="a" style="left:0.5px;top:214.10px;width:585px;height:1px;background:#202226"></div>
<div class="t" style="left:4.77px;top:223.00px;font-size:10.2px;line-height:10.2px;font-weight:normal;color:#ccccdc;">openssh-server</div>
<div class="t" style="left:169.68px;top:223.00px;font-size:10.2px;line-height:10.2px;font-weight:normal;color:#ccccdc;transform:scaleX(0.9834);transform-origin:0 0;">Package unfixed</div>
<div class="t" style="left:570.72px;top:223.00px;font-size:10.2px;line-height:10.2px;font-weight:normal;color:#ccccdc;">1</div>
<div class="a" style="left:0.5px;top:238.05px;width:585px;height:1px;background:#202226"></div>
</div>
<div class="a" style="left:593.8px;top:531px;width:3.400000000000091px;height:233px;background:#111216"></div>
<div class="a" style="left:594.1px;top:532px;width:2.8999999999999773px;height:212px;background:#3e4047;border-radius:1.5px"></div>
<div class="p" style="left:604px;top:485px;width:988px;height:281px"></div>
<svg style="left:0;top:0" width="1600" height="771" viewBox="0 0 1600 771"><g stroke="#34373c" stroke-width="1" fill="none"><path d="M629.7 743.50H1456.6"/><path d="M629.7 711.57H1456.6"/><path d="M629.7 679.64H1456.6"/><path d="M629.7 647.71H1456.6"/><path d="M629.7 615.78H1456.6"/><path d="M629.7 583.85H1456.6"/><path d="M629.7 551.92H1456.6"/><path d="M629.7 519.99H1456.6"/><path d="M664.30 520V743.5"/><path d="M733.24 520V743.5"/><path d="M802.18 520V743.5"/><path d="M871.12 520V743.5"/><path d="M940.06 520V743.5"/><path d="M1009.00 520V743.5"/><path d="M1077.94 520V743.5"/><path d="M1146.88 520V743.5"/><path d="M1215.82 520V743.5"/><path d="M1284.76 520V743.5"/><path d="M1353.70 520V743.5"/><path d="M1422.64 520V743.5"/></g></svg>
<div class="t" style="left:621.44px;top:739.00px;font-size:9px;line-height:9px;font-weight:normal;color:#b9bac4;">0</div>
<div class="t" style="left:616.43px;top:707.00px;font-size:9px;line-height:9px;font-weight:normal;color:#b9bac4;">20</div>
<div class="t" style="left:616.43px;top:675.00px;font-size:9px;line-height:9px;font-weight:normal;color:#b9bac4;">40</div>
<div class="t" style="left:616.43px;top:643.00px;font-size:9px;line-height:9px;font-weight:normal;color:#b9bac4;">60</div>
<div class="t" style="left:616.43px;top:611.00px;font-size:9px;line-height:9px;font-weight:normal;color:#b9bac4;">80</div>
<div class="t" style="left:611.43px;top:579.00px;font-size:9px;line-height:9px;font-weight:normal;color:#b9bac4;">100</div>
<div class="t" style="left:611.43px;top:547.00px;font-size:9px;line-height:9px;font-weight:normal;color:#b9bac4;">120</div>
<div class="t" style="left:611.43px;top:515.00px;font-size:9px;line-height:9px;font-weight:normal;color:#b9bac4;">140</div>
<div class="t" style="left:652.33px;top:749.00px;font-size:10px;line-height:10px;font-weight:normal;color:#b9bac4;transform:scaleX(0.9567);transform-origin:0 0;">00:30</div>
<div class="t" style="left:721.27px;top:749.00px;font-size:10px;line-height:10px;font-weight:normal;color:#b9bac4;transform:scaleX(0.9567);transform-origin:0 0;">01:00</div>
<div class="t" style="left:790.21px;top:749.00px;font-size:10px;line-height:10px;font-weight:normal;color:#b9bac4;transform:scaleX(0.9567);transform-origin:0 0;">01:30</div>
<div class="t" style="left:859.15px;top:749.00px;font-size:10px;line-height:10px;font-weight:normal;color:#b9bac4;transform:scaleX(0.9567);transform-origin:0 0;">02:00</div>
<div class="t" style="left:928.09px;top:749.00px;font-size:10px;line-height:10px;font-weight:normal;color:#b9bac4;transform:scaleX(0.9567);transform-origin:0 0;">02:30</div>
<div class="t" style="left:997.03px;top:749.00px;font-size:10px;line-height:10px;font-weight:normal;color:#b9bac4;transform:scaleX(0.9567);transform-origin:0 0;">03:00</div>
<div class="t" style="left:1065.97px;top:749.00px;font-size:10px;line-height:10px;font-weight:normal;color:#b9bac4;transform:scaleX(0.9567);transform-origin:0 0;">03:30</div>
<div class="t" style="left:1134.91px;top:749.00px;font-size:10px;line-height:10px;font-weight:normal;color:#b9bac4;transform:scaleX(0.9567);transform-origin:0 0;">04:00</div>
<div class="t" style="left:1203.85px;top:749.00px;font-size:10px;line-height:10px;font-weight:normal;color:#b9bac4;transform:scaleX(0.9567);transform-origin:0 0;">04:30</div>
<div class="t" style="left:1272.79px;top:749.00px;font-size:10px;line-height:10px;font-weight:normal;color:#b9bac4;transform:scaleX(0.9567);transform-origin:0 0;">05:00</div>
<div class="t" style="left:1341.73px;top:749.00px;font-size:10px;line-height:10px;font-weight:normal;color:#b9bac4;transform:scaleX(0.9567);transform-origin:0 0;">05:30</div>
<div class="t" style="left:1410.67px;top:749.00px;font-size:10px;line-height:10px;font-weight:normal;color:#b9bac4;transform:scaleX(0.9567);transform-origin:0 0;">06:00</div>
<div class="a" style="left:813.6px;top:708px;width:8.0px;height:35.5px;background:#e3b23a;border-top:1px solid #f2c04a"></div>
<div class="a" style="left:836.5px;top:708px;width:8.0px;height:35.5px;background:#6bcbdb;border-top:1px solid #7ad8e8"></div>
<div class="a" style="left:1399.6px;top:548.6px;width:7.800000000000182px;height:194.89999999999998px;background:#7db06c;border-top:1px solid #8fd07f"></div>
<div class="a" style="left:1473px;top:536.1px;width:108.90000000000009px;height:17.5px;background:#202226;border-radius:2px"></div>
<div class="a" style="left:1474px;top:526.2px;width:10.099999999999909px;height:3.0px;background:#7eb26d;border-radius:1px"></div>
<div class="t" style="left:1490.02px;top:522.00px;font-size:8.9px;line-height:8.9px;font-weight:normal;color:#b9bac4;transform:scaleX(1.0194);transform-origin:0 0;">ubunutu2004vm</div>
<div class="a" style="left:1474px;top:544.1px;width:10.099999999999909px;height:3.0px;background:#eab839;border-radius:1px"></div>
<div class="t" style="left:1490.56px;top:540.00px;font-size:8.9px;line-height:8.9px;font-weight:normal;color:#b9bac4;transform:scaleX(1.0461);transform-origin:0 0;">WIN-BO3C0QB0OV0</div>
<div class="a" style="left:1474px;top:561.6px;width:10.099999999999909px;height:3.0px;background:#6ed0e0;border-radius:1px"></div>
<div class="t" style="left:1490.56px;top:558.00px;font-size:8.9px;line-height:8.9px;font-weight:normal;color:#b9bac4;transform:scaleX(1.0553);transform-origin:0 0;">WIN-7FK8M79Q5R6</div>
<div class="t" style="left:1012.40px;top:493.00px;font-size:10px;line-height:10px;font-weight:bold;color:#d8d9e0;transform:scaleX(0.8894);transform-origin:0 0;">VULNERABILITY EVENTS - HISTOGRAM</div>
</body></html>
